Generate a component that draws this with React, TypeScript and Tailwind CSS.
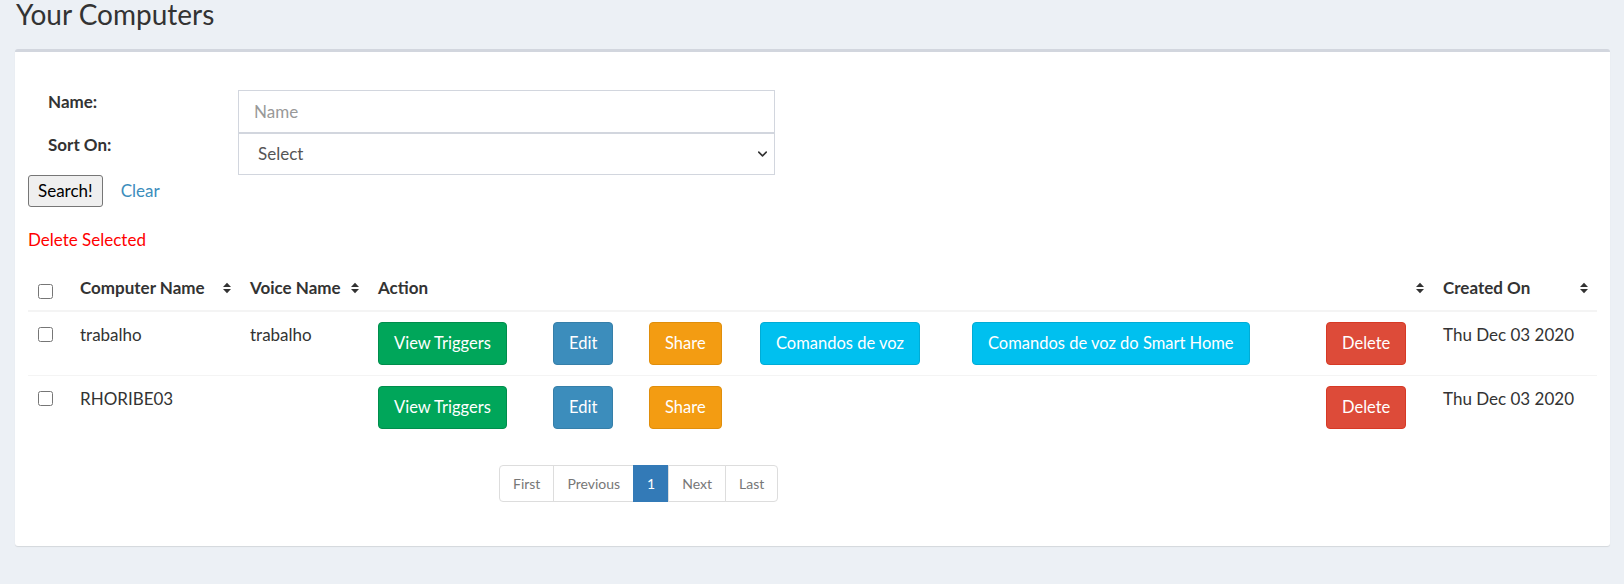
import { ChevronDown } from "lucide-react";

interface ComputerRow {
  name: string;
  voice: string;
  created: string;
  hasVoiceCommands: boolean;
}

const ROWS: ComputerRow[] = [
  { name: "trabalho", voice: "trabalho", created: "Thu Dec 03 2020", hasVoiceCommands: true },
  { name: "RHORIBE03", voice: "", created: "Thu Dec 03 2020", hasVoiceCommands: false },
];

const PAGES = ["First", "Previous", "1", "Next", "Last"];

function SortIcon() {
  return (
    <svg
      width="8"
      height="12"
      viewBox="0 0 8 12"
      className="absolute right-[9px] top-1/2 -translate-y-1/2"
    >
      <path d="M0 5 L4 0.8 L8 5 Z M0 7 L4 11.2 L8 7 Z" fill="#333" />
    </svg>
  );
}

function ActionButton({ label, className }: { label: string; className: string }) {
  return (
    <button
      type="button"
      className={`h-[43px] whitespace-nowrap rounded-[4px] border px-[15px] py-[8px] text-[16.5px] leading-[25px] text-white ${className}`}
    >
      {label}
    </button>
  );
}

export default function App() {
  return (
    <div className="min-h-[584px] bg-[#ecf0f5] font-['Lato',sans-serif] text-[17px] text-[#333]">
      <h1 className="pl-[16px] text-[28px] leading-[28px] font-normal">Your Computers</h1>

      <div className="mt-[21px] ml-[15px] mr-[14px] rounded-[3px] border-t-[3px] border-[#d2d6de] bg-white px-[13px] pt-[38px] pb-[44px] shadow-[0_1px_1px_rgba(0,0,0,0.1)]">
        {/* filtros */}
        <div className="grid grid-cols-[210px_537px]">
          <label className="pl-[20px] font-bold leading-[24px]">Name:</label>
          <input
            type="text"
            placeholder="Name"
            className="h-[43px] border border-[#d2d6de] px-[15px] text-[17px] text-[#555] outline-none placeholder:text-[#999]"
          />
          <label className="pl-[20px] font-bold leading-[24px]">Sort On:</label>
          <div className="relative">
            <select className="h-[42px] w-full appearance-none border border-[#d2d6de] bg-white pl-[19px] text-[17px] text-[#555] outline-none">
              <option>Select</option>
            </select>
            <ChevronDown
              size={15}
              strokeWidth={2.5}
              className="pointer-events-none absolute right-[5px] top-1/2 -translate-y-1/2 text-[#333]"
            />
          </div>
        </div>

        <div className="flex items-center gap-[18px]">
          <button
            type="button"
            className="h-[32px] rounded-[3px] border border-[#767676] bg-[#efefef] px-[9px] text-[17px] text-black"
          >
            Search!
          </button>
          <a href="#" className="text-[#3c8dbc]">
            Clear
          </a>
        </div>

        <div className="mt-[21px] leading-[24px] text-[#ff0000]">Delete Selected</div>

        <table className="mt-[13px] w-full table-fixed border-collapse">
          <colgroup>
            <col className="w-[42px]" />
            <col className="w-[170px]" />
            <col className="w-[128px]" />
            <col className="w-[175px]" />
            <col className="w-[96px]" />
            <col className="w-[111px]" />
            <col className="w-[212px]" />
            <col className="w-[354px]" />
            <col className="w-[117px]" />
            <col className="w-[164px]" />
          </colgroup>
          <thead>
            <tr>
              <th className="border-b-2 border-[#f4f4f4] p-[10px] text-left align-top">
                <input type="checkbox" className="mt-[9px] block h-[15px] w-[15px]" />
              </th>
              <th className="relative border-b-2 border-[#f4f4f4] p-[10px] text-left font-bold leading-[25px]">
                Computer Name
                <SortIcon />
              </th>
              <th className="relative border-b-2 border-[#f4f4f4] p-[10px] text-left font-bold leading-[25px]">
                Voice Name
                <SortIcon />
              </th>
              <th
                colSpan={6}
                className="relative border-b-2 border-[#f4f4f4] p-[10px] text-left font-bold leading-[25px]"
              >
                Action
                <SortIcon />
              </th>
              <th className="relative border-b-2 border-[#f4f4f4] p-[10px] text-left font-bold leading-[25px]">
                Created On
                <SortIcon />
              </th>
            </tr>
          </thead>
          <tbody>
            {ROWS.map((row) => (
              <tr key={row.name} className="border-t border-[#f4f4f4]">
                <td className="p-[10px] align-top">
                  <input type="checkbox" className="mt-[5px] block h-[15px] w-[15px]" />
                </td>
                <td className="p-[10px] align-top leading-[25px]">{row.name}</td>
                <td className="p-[10px] align-top leading-[25px]">{row.voice}</td>
                <td className="p-[10px] align-top">
                  <ActionButton label="View Triggers" className="border-[#008d4c] bg-[#00a65a]" />
                </td>
                <td className="p-[10px] align-top">
                  <ActionButton label="Edit" className="border-[#367fa9] bg-[#3c8dbc]" />
                </td>
                <td className="p-[10px] align-top">
                  <ActionButton label="Share" className="border-[#e08e0b] bg-[#f39c12]" />
                </td>
                <td className="p-[10px] align-top">
                  {row.hasVoiceCommands ? (
                    <ActionButton label="Comandos de voz" className="border-[#00acd6] bg-[#00c0ef]" />
                  ) : null}
                </td>
                <td className="p-[10px] align-top">
                  {row.hasVoiceCommands ? (
                    <ActionButton
                      label="Comandos de voz do Smart Home"
                      className="border-[#00acd6] bg-[#00c0ef]"
                    />
                  ) : null}
                </td>
                <td className="p-[10px] align-top">
                  <ActionButton label="Delete" className="border-[#d73925] bg-[#dd4b39]" />
                </td>
                <td className="p-[10px] align-top leading-[25px]">{row.created}</td>
              </tr>
            ))}
          </tbody>
        </table>

        <ul className="mt-[26px] ml-[471px] flex w-max text-[14px] leading-[21px]">
          {PAGES.map((page, i) => {
            const active = page === "1";
            return (
              <li key={page}>
                <a
                  href="#"
                  className={`-ml-px block border px-[13px] py-[7px] ${
                    active ? "border-[#337ab7] bg-[#337ab7] text-white" : "border-[#ddd] bg-white text-[#777]"
                  } ${i === 0 ? "ml-0 rounded-l-[4px]" : ""} ${i === PAGES.length - 1 ? "rounded-r-[4px]" : ""}`}
                >
                  {page}
                </a>
              </li>
            );
          })}
        </ul>
      </div>
    </div>
  );
}
